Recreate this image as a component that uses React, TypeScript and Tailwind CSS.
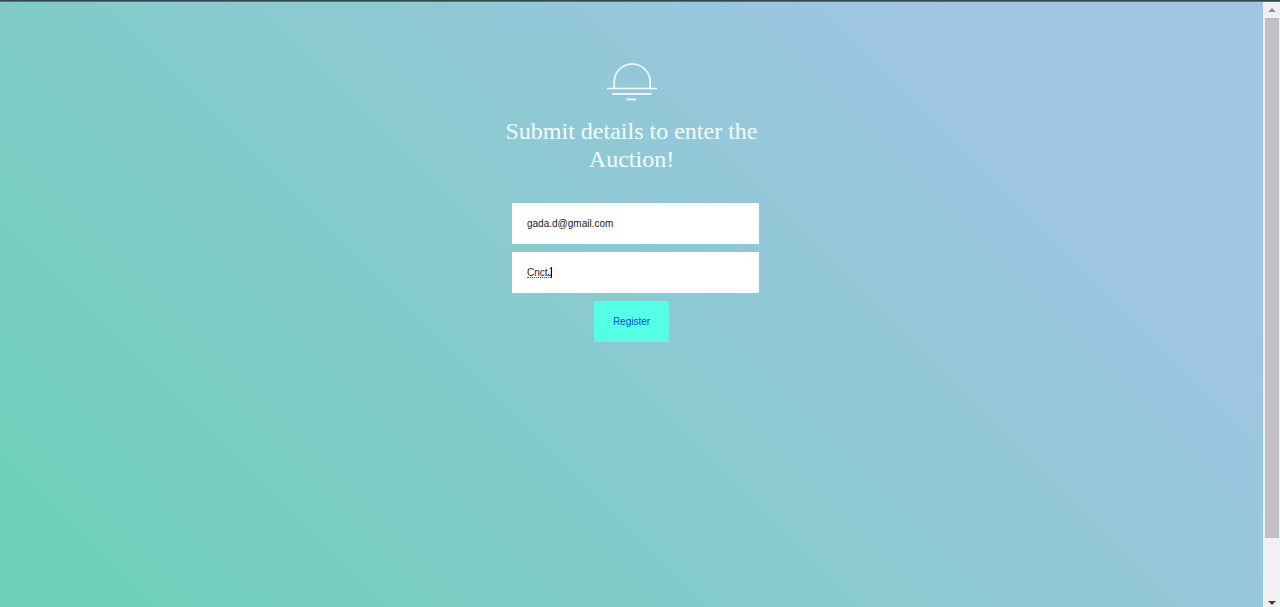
import { useState } from "react";

function SunsetIcon() {
  return (
    <svg viewBox="0 0 52 40" className="h-10 w-13" fill="none" stroke="#f4ffff" strokeWidth="1.7" aria-hidden="true">
      <path d="M8.2 26.5V20a18 18 0 0 1 36 0V26.5" />
      <path d="M1 26.5H51M6 31.8H45.5M20.5 37.3H30" />
    </svg>
  );
}

function ScrollBar() {
  return (
    <div className="flex w-[17px] shrink-0 flex-col items-center bg-[#f1f1f1]" aria-hidden="true">
      <div className="flex h-4 items-center">
        <svg viewBox="0 0 8 4" className="h-1 w-2" fill="#8f8f8f"><path d="M0 4L4 0L8 4Z" /></svg>
      </div>
      <div className="flex w-full grow flex-col pr-px pl-0.5">
        <div className="grow-[520] bg-[#c1c1c1]" />
        <div className="grow-[63]" />
      </div>
      <div className="flex h-1.5 items-start">
        <svg viewBox="0 0 8 4" className="h-1 w-2" fill="#404040"><path d="M0 0L4 4L8 0Z" /></svg>
      </div>
    </div>
  );
}

const field =
  "block h-[41px] w-full bg-white px-[15px] text-[10px] text-[#222] outline-none font-['Liberation_Sans',Arial,sans-serif]";

export default function App() {
  const [email, setEmail] = useState("gada.d@gmail.com");
  const [name, setName] = useState("CnctJ");
  return (
    <div className="flex min-h-screen flex-col">
      <div className="h-0.5 border-t border-[#34484b] bg-[#547174]" />
      <div className="flex grow">
        <main className="flex grow flex-col items-center bg-[linear-gradient(45deg,#6bd0b6_0%,#a1c5e4_83%)] pt-[60px] font-['Liberation_Serif','Times_New_Roman',serif]">
          <SunsetIcon />
          <h1 className="mt-[15px] w-[270px] text-center text-[24px] leading-7 text-[#f4ffff]">
            Submit details to enter the Auction!
          </h1>
          <form className="mt-[30px] flex w-[255px] flex-col gap-2" onSubmit={(e) => e.preventDefault()}>
            <div className="flex flex-col gap-2 pl-2">
              <input type="email" aria-label="Email" className={field} value={email} onChange={(e) => setEmail(e.target.value)} />
              <div className="relative">
                <input
                  type="text"
                  aria-label="Name"
                  spellCheck={false}
                  className={field}
                  value={name}
                  onChange={(e) => setName(e.target.value)}
                />
                <span className="pointer-events-none absolute top-[25px] left-[15px] w-6 border-b border-dotted border-[#e02020]" />
                <span className="pointer-events-none absolute top-[15px] left-[39px] h-[11px] w-px bg-black" />
              </div>
            </div>
            <button type="submit" className="h-[41px] w-[75px] self-center bg-[#54ffe5] text-[10px] text-[#0050dc] font-['Liberation_Sans',Arial,sans-serif]">
              Register
            </button>
          </form>
        </main>
        <ScrollBar />
      </div>
    </div>
  );
}
